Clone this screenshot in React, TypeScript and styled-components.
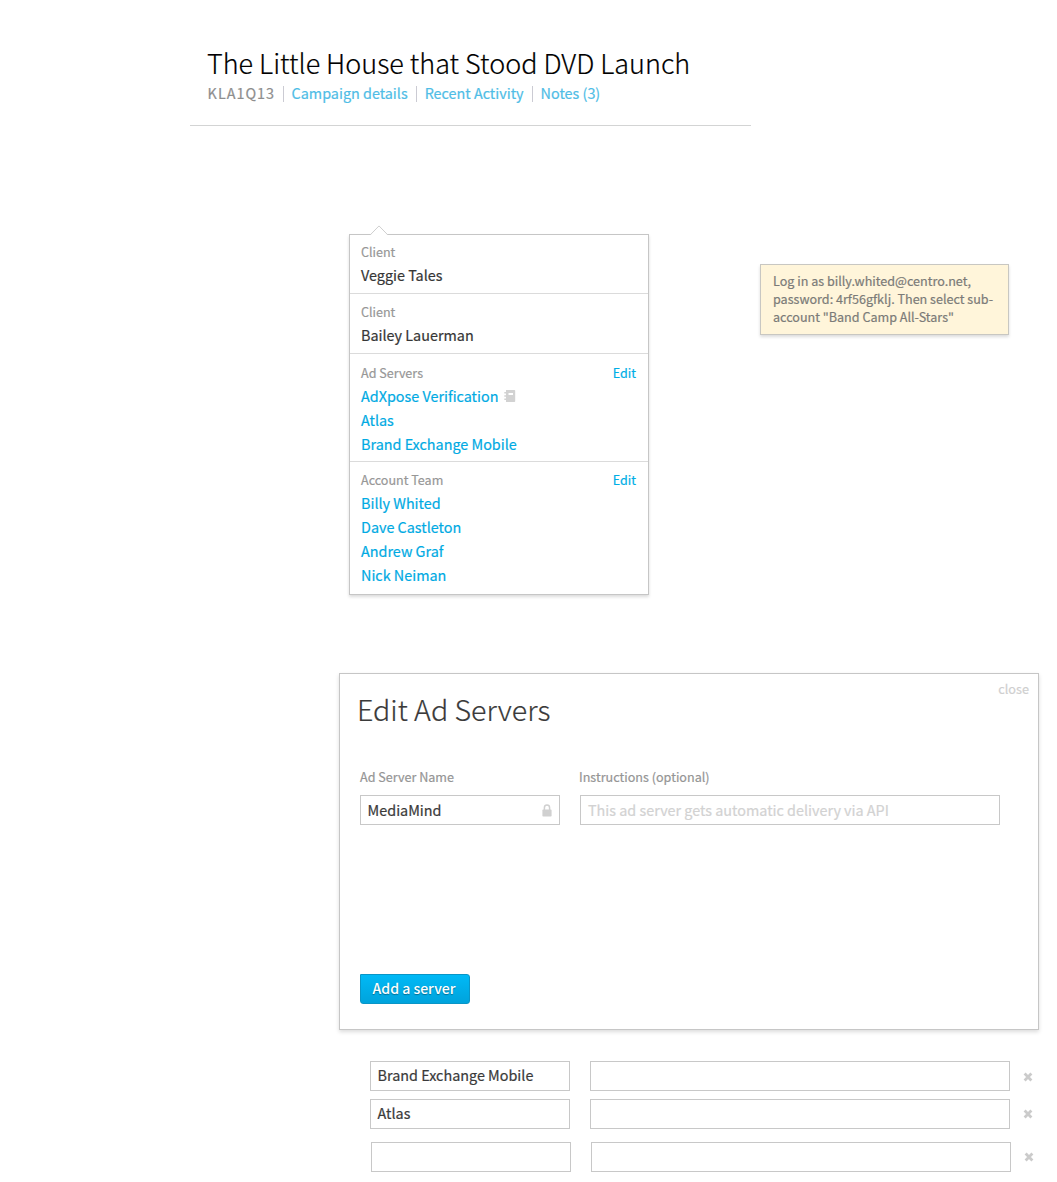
import React from 'react';
import styled, { createGlobalStyle } from 'styled-components';

const GlobalStyle = createGlobalStyle`
  * { box-sizing: border-box; }
  body {
    margin: 0;
    background: #fff;
    color: #3c3c3c;
    font-family: "Noto Sans CJK SC", "Noto Sans", sans-serif;
    font-size: 14.38px;
    -webkit-text-stroke: 0.2px;
  }
`;

const Page = styled.div`
  width: 1057px;
  height: 1182px;
  overflow: hidden;
  display: flex;
  flex-direction: column;
  align-items: flex-start;
`;

const Header = styled.header`
  width: 561px;
  margin-left: 190px;
  padding: 43px 0 21px 17px;
  border-bottom: 1px solid #d3d4d4;
`;

const Title = styled.h1`
  margin: 0;
  font-size: 26.98px;
  line-height: 39px;
  font-weight: 300;
  color: #000;
  white-space: nowrap;
`;

const Meta = styled.nav`
  display: flex;
  align-items: center;
  line-height: 22px;
  height: 22px;
`;

const Code = styled.span`
  color: #8e8e8e;
  letter-spacing: 1px;
  margin-left: 0.6px;
  margin-right: -0.5px;
`;

const MetaLink = styled.a`
  color: #4fbde6;
  white-space: nowrap;
`;

const Pipe = styled.span`
  width: 1px;
  height: 16px;
  margin: 2px 8px 0;
  background: #cbcbd3;
`;

const Middle = styled.section`
  display: flex;
  align-items: flex-start;
  gap: 111px;
  margin: 108px 0 0 349px;
`;

const Popover = styled.div`
  position: relative;
  width: 300px;
  height: 361px;
  border: 1px solid #c6c6c6;
  background: #fff;
  box-shadow: 0 2px 3px rgba(0, 0, 0, 0.14);
`;

const Arrow = styled.svg`
  position: absolute;
  left: 20px;
  top: -10px;
`;

const Section = styled.div<{ $top: number; $bottom: number }>`
  padding: ${p => p.$top}px 12px ${p => p.$bottom}px 11px;
  & + & { border-top: 1px solid #dbdbdb; }
`;

const SectionHead = styled.div`
  display: flex;
  justify-content: space-between;
  height: 21px;
  line-height: 20px;
  font-size: 12.55px;
  color: #979797;
`;

const EditLink = styled.a`
  color: #00aee6;
`;

const Item = styled.div<{ $link?: boolean }>`
  display: flex;
  align-items: center;
  gap: 6px;
  line-height: 24px;
  height: 24px;
  color: ${p => (p.$link ? '#00aae3' : '#363636')};
`;

const Note = styled.div`
  width: 249px;
  height: 71px;
  margin-top: 30px;
  padding: 7px 0 0 12px;
  border: 1px solid #c8c7c2;
  background: #fff5da;
  box-shadow: 0 2px 3px rgba(0, 0, 0, 0.14);
  font-size: 12.58px;
  line-height: 18px;
  color: #7b7b78;
  white-space: nowrap;
`;

const Modal = styled.section`
  width: 700px;
  height: 357px;
  margin: 78px 0 0 339px;
  padding: 5px 0 25px;
  border: 1px solid #c6c6c6;
  background: #fff;
  box-shadow: 0 2px 4px rgba(0, 0, 0, 0.14);
  display: flex;
  flex-direction: column;
`;

const ModalTop = styled.div`
  display: flex;
  justify-content: space-between;
  align-items: flex-start;
  height: 88px;
  padding: 0 9px 0 17px;
`;

const ModalTitle = styled.h2`
  margin: 10px 0 0;
  font-size: 28.6px;
  line-height: 40px;
  font-weight: 300;
  color: #3a3a3a;
`;

const Close = styled.a`
  font-size: 12.7px;
  line-height: 20px;
  color: #cfcfcf;
`;

const Fields = styled.div`
  display: grid;
  grid-template-columns: 200px 420px;
  column-gap: 20px;
  padding-left: 20px;
`;

const Label = styled.label<{ $shift?: number }>`
  height: 28px;
  line-height: 20px;
  font-size: 12.58px;
  margin-left: ${p => p.$shift ?? 0}px;
  color: #959595;
`;

const Field = styled.div<{ $wide?: boolean; $muted?: boolean; $raise?: number }>`
  display: flex;
  align-items: center;
  justify-content: space-between;
  width: ${p => (p.$wide ? 420 : 200)}px;
  height: 30px;
  padding: 0 7px ${p => p.$raise ?? 0}px ${p => (p.$muted ? 7 : 6.6)}px;
  border: 1px solid #c8c8c8;
  background: #fff;
  line-height: 22px;
  color: ${p => (p.$muted ? '#d2d2d2' : '#3a3a3a')};
`;

const AddButton = styled.button`
  width: 110px;
  height: 30px;
  margin: auto 0 0 20px;
  padding: 0 2px 2px 0;
  border: 1px solid #0a95c6;
  border-radius: 0 3px 3px 3px;
  background: linear-gradient(#00b9f6, #00a3dc);
  color: #fff;
  font: 500 14.05px/22px "Noto Sans CJK SC", sans-serif;
  -webkit-text-stroke: 0;
  text-shadow: 0 1px 1px rgba(0, 0, 0, 0.35);
`;

const Rows = styled.div`
  margin: 31px 0 0 370px;
`;

const ServerRow = styled.div<{ $gap: number; $shift?: number }>`
  display: flex;
  align-items: center;
  gap: 20px;
  margin: 0 0 ${p => p.$gap}px ${p => p.$shift ?? 0}px;
`;

const Remove = styled.svg<{ $drop: number }>`
  margin: ${p => p.$drop}px 0 0 -7px;
`;

const NotebookIcon = () => (
  <svg width="12" height="12" viewBox="0 0 12 12" fill="#d2d2d2">
    <path
      fillRule="evenodd"
      d="M2 0h8.4a.8.8 0 0 1 .8.8v10.4a.8.8 0 0 1-.8.8H2V10H.3V8.4H2V6.8H.3V5.2H2V3.6H.3V2H2zM4.5 3v2h4.5V3z"
    />
  </svg>
);

const LockIcon = () => (
  <svg width="10" height="13" viewBox="0 0 10 13">
    <path d="M2.4 6V3.7a2.6 2.7 0 0 1 5.2 0V6" fill="none" stroke="#d0d0d0" strokeWidth="1.5" />
    <rect x="0.4" y="5.6" width="9.2" height="7" rx="0.8" fill="#d0d0d0" />
  </svg>
);

const RemoveIcon = ({ drop }: { drop: number }) => (
  <Remove $drop={drop} width="10" height="10" viewBox="0 0 10 10">
    <path d="M1.6 1.6l6.8 6.8M8.4 1.6L1.6 8.4" stroke="#cbcbcb" strokeWidth="2.8" />
  </Remove>
);

const rows = [
  { name: 'Brand Exchange Mobile', gap: 8, shift: 0, drop: 2 },
  { name: 'Atlas', gap: 13, shift: 0, drop: 0 },
  { name: '', gap: 0, shift: 1, drop: 0 },
];

export default function App() {
  return (
    <>
      <GlobalStyle />
      <Page>
        <Header>
          <Title>The Little House that Stood DVD Launch</Title>
          <Meta>
            <Code>KLA1Q13</Code>
            <Pipe />
            <MetaLink>Campaign details</MetaLink>
            <Pipe />
            <MetaLink>Recent Activity</MetaLink>
            <Pipe />
            <MetaLink>Notes (3)</MetaLink>
          </Meta>
        </Header>

        <Middle>
          <Popover>
            <Arrow width="18" height="11" viewBox="0 0 18 11">
              <path d="M0.5 10L9 0.9L17.5 10V11H0.5z" fill="#fff" />
              <path d="M0.5 9.6L9 0.9L17.5 9.6" fill="none" stroke="#cfcfcf" />
            </Arrow>
            <Section $top={7} $bottom={6}>
              <SectionHead>Client</SectionHead>
              <Item>Veggie Tales</Item>
            </Section>
            <Section $top={8} $bottom={6}>
              <SectionHead>Client</SectionHead>
              <Item>Bailey Lauerman</Item>
            </Section>
            <Section $top={9} $bottom={5}>
              <SectionHead>
                Ad Servers <EditLink>Edit</EditLink>
              </SectionHead>
              <Item $link>
                AdXpose Verification <NotebookIcon />
              </Item>
              <Item $link>Atlas</Item>
              <Item $link>Brand Exchange Mobile</Item>
            </Section>
            <Section $top={8} $bottom={7}>
              <SectionHead>
                Account Team <EditLink>Edit</EditLink>
              </SectionHead>
              <Item $link>Billy Whited</Item>
              <Item $link>Dave Castleton</Item>
              <Item $link>Andrew Graf</Item>
              <Item $link>Nick Neiman</Item>
            </Section>
          </Popover>
          <Note>
            Log in as billy.whited@centro.net,
            <br />
            password: 4rf56gfklj. Then select sub-
            <br />
            account "Band Camp All-Stars"
          </Note>
        </Middle>

        <Modal>
          <ModalTop>
            <ModalTitle>Edit Ad Servers</ModalTitle>
            <Close>close</Close>
          </ModalTop>
          <Fields>
            <Label>Ad Server Name</Label>
            <Label $shift={-1}>Instructions (optional)</Label>
            <Field>
              MediaMind <LockIcon />
            </Field>
            <Field $wide $muted>
              This ad server gets automatic delivery via API
            </Field>
          </Fields>
          <AddButton>Add a server</AddButton>
        </Modal>

        <Rows>
          {rows.map((r, i) => (
            <ServerRow key={i} $gap={r.gap} $shift={r.shift}>
              <Field $raise={2}>{r.name}</Field>
              <Field $wide />
              <RemoveIcon drop={r.drop} />
            </ServerRow>
          ))}
        </Rows>
      </Page>
    </>
  );
}
